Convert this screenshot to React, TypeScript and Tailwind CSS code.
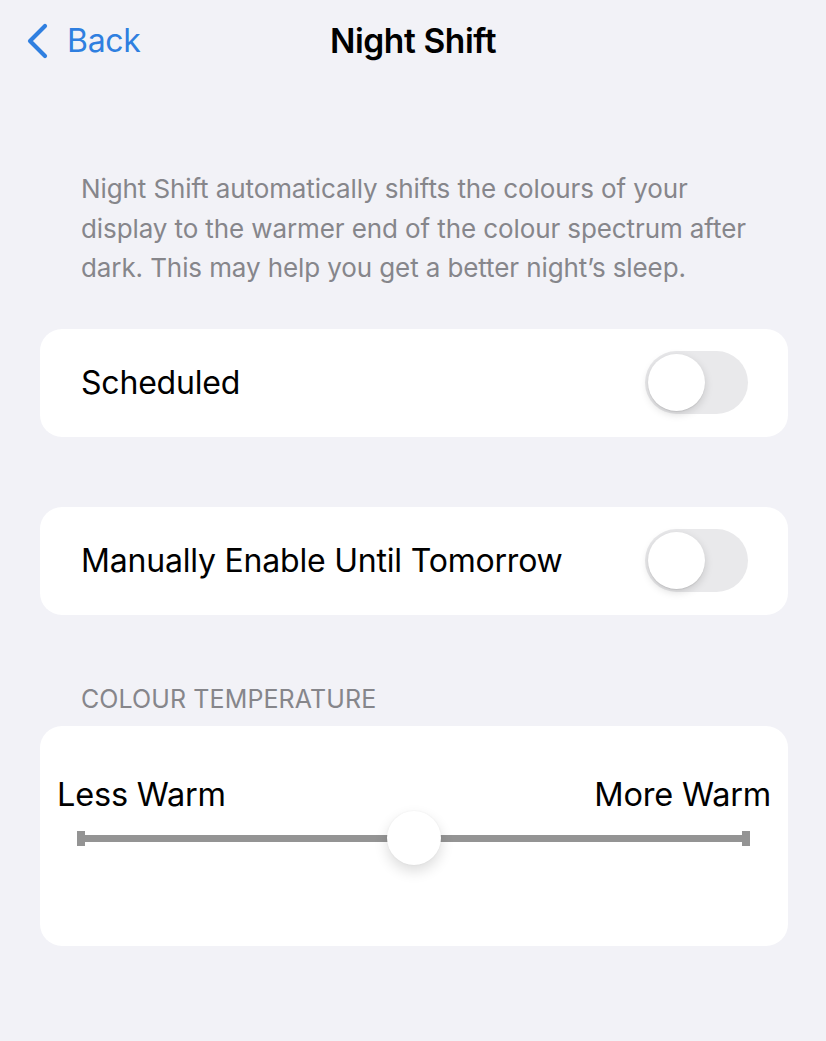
import React from "react";

const font = { fontFamily: "Inter, 'Noto Sans', sans-serif" };

function Toggle() {
  return (
    <div className="relative h-[63px] w-[103px] rounded-full bg-[#e9e9eb]">
      <div className="absolute left-[3px] top-[3px] h-[57px] w-[57px] rounded-full bg-white shadow-[0_3px_8px_rgba(0,0,0,0.15),0_1px_1px_rgba(0,0,0,0.08)]" />
    </div>
  );
}

function Row({ label }: { label: string }) {
  return (
    <div className="ml-[40px] mr-[38px] flex h-[108px] items-center justify-between rounded-[22px] bg-white pl-[41px] pr-[40px]">
      <span className="text-[32px] tracking-[-0.2px] text-black">{label}</span>
      <Toggle />
    </div>
  );
}

export default function App() {
  return (
    <div className="min-h-[1041px] w-[826px] bg-[#f2f2f7]" style={font}>
      <div className="relative flex h-[82px] items-center">
        <div className="flex items-center pl-[26px] text-[#2f7fe0]">
          <svg width="24" height="36" viewBox="0 0 24 36" fill="none">
            <path d="M19 3 L4 18 L19 33" stroke="currentColor" strokeWidth="4.2" strokeLinecap="round" strokeLinejoin="round" />
          </svg>
          <span className="ml-[17px] text-[32px] tracking-[-0.3px]">Back</span>
        </div>
        <div className="absolute left-1/2 -translate-x-1/2 text-[33.5px] font-semibold tracking-[-0.4px] text-black">
          Night Shift
        </div>
      </div>

      <p className="mt-[87px] whitespace-nowrap pl-[81px] text-[26px] leading-[39.5px] tracking-[-0.1px] text-[#86868b]">
        Night Shift automatically shifts the colours of your
        <br />
        display to the warmer end of the colour spectrum after
        <br />
        dark. This may help you get a better night’s sleep.
      </p>

      <div className="mt-[41px]">
        <Row label="Scheduled" />
      </div>
      <div className="mt-[70px]">
        <Row label="Manually Enable Until Tomorrow" />
      </div>

      <div className="mt-[66px] pl-[81px] text-[25px] uppercase tracking-[0.1px] text-[#86868b]">
        Colour Temperature
      </div>

      <div className="ml-[40px] mr-[38px] mt-[8px] h-[220px] rounded-[22px] bg-white px-[17px] pt-[49px]">
        <div className="flex justify-between text-[32.5px] leading-[40px] tracking-[-0.2px] text-black">
          <span>Less Warm</span>
          <span>More Warm</span>
        </div>
        <div className="relative ml-[20px] mr-[21px] mt-[13px] flex h-[20px] items-center">
          <div className="h-[15px] w-[8px] bg-[#949494]" />
          <div className="h-[7px] flex-1 bg-[#949494]" />
          <div className="h-[15px] w-[8px] bg-[#949494]" />
          <div className="absolute left-1/2 top-1/2 h-[54px] w-[54px] -translate-x-1/2 -translate-y-1/2 rounded-full bg-white shadow-[0_6px_14px_rgba(0,0,0,0.14),0_0_2px_rgba(0,0,0,0.06)]" />
        </div>
      </div>
    </div>
  );
}
